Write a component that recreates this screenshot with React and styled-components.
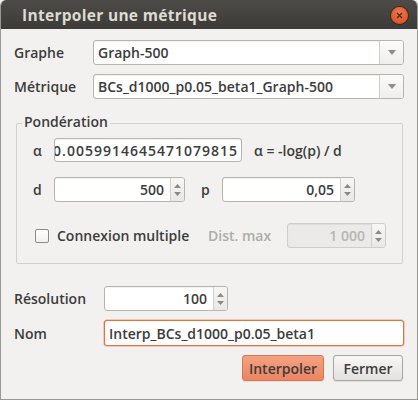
import React from 'react'
import styled, { createGlobalStyle } from 'styled-components'

const Global = createGlobalStyle`
  html, body { margin: 0; padding: 0; background: #f2f1f0; }
  * { box-sizing: border-box; }
  body { font-family: "Open Sans", "Noto Sans", sans-serif; }
`

const Window = styled.div`
  width: 418px;
  height: 400px;
  display: flex;
  flex-direction: column;
  background: #f2f1f0;
  border-radius: 6px 6px 0 0;
  overflow: hidden;
  border: 1px solid #9a9893;
  border-top: none;
`

const TitleBar = styled.div`
  height: 29px;
  flex: none;
  display: flex;
  align-items: center;
  justify-content: space-between;
  padding: 0 9px 0 21px;
  background: linear-gradient(#4c4b47, #3c3b37);
  color: #dfdbd2;
  font-size: 15.5px;
  font-weight: 700;
  letter-spacing: 0.3px;
`

const CloseBtn = styled.div`
  width: 17px;
  height: 17px;
  border-radius: 50%;
  background: radial-gradient(circle at 50% 35%, #f27a4d, #d9471a);
  box-shadow: 0 0 0 1px #3a2a22;
  display: flex;
  align-items: center;
  justify-content: center;
  margin-top: 1px;
`

const Body = styled.div`
  flex: 1;
  display: flex;
  flex-direction: column;
  padding: 11px 14px 0 13px;
  color: #3c3c3c;
  font-size: 14px;
  font-weight: 600;
`

const Row = styled.div`
  display: flex;
  align-items: center;
  height: ${p => p.$h || 25}px;
  margin-top: ${p => p.$mt || 0}px;
`

const Label = styled.div`
  width: ${p => p.$w}px;
  padding-left: ${p => p.$pl || 0}px;
  flex: none;
  white-space: nowrap;
  color: ${p => (p.$disabled ? '#aeaca8' : '#3c3c3c')};
`

const Field = styled.div`
  width: ${p => p.$w}px;
  height: ${p => p.$h || 25}px;
  flex: none;
  display: flex;
  align-items: center;
  background: ${p => (p.$disabled ? '#ebeae8' : '#fff')};
  border: 1px solid ${p => (p.$focus ? '#e2723f' : p.$disabled ? '#cfcdca' : '#b7b4ae')};
  border-radius: 3px;
  box-shadow: ${p => (p.$focus ? '0 0 0 0.5px #f0a07a' : 'inset 0 1px 1px rgba(0,0,0,0.06)')};
  overflow: hidden;
  color: ${p => (p.$disabled ? '#b8b6b2' : '#3c3c3c')};
`

const FieldText = styled.div`
  flex: 1;
  padding: 0 ${p => (p.$right ? 6 : 3)}px 0 ${p => (p.$right ? 0 : 4)}px;
  text-align: ${p => (p.$right ? 'right' : 'left')};
  white-space: nowrap;
  overflow: hidden;
  letter-spacing: ${p => p.$spacing || 0}px;
  direction: ${p => (p.$clipLeft ? 'rtl' : 'ltr')};
`

const ComboButton = styled.div`
  width: 24px;
  height: 100%;
  flex: none;
  border-left: 1px solid #d3d0cb;
  display: flex;
  align-items: center;
  justify-content: center;
  background: linear-gradient(#fbfbfa, #efeeec);
`

const SpinButtons = styled.div`
  width: 14px;
  height: 100%;
  flex: none;
  display: flex;
  flex-direction: column;
  align-items: center;
  justify-content: center;
  gap: 4px;
  border-left: 1px solid #d3d0cb;
  background: linear-gradient(#f7f6f5, #e9e8e6);
`

const Group = styled.div`
  position: relative;
  margin: 24px 0 0 2px;
  width: 387px;
  height: 141px;
  border: 1px solid #d2d0cc;
  border-radius: 2px;
  padding: 14px 0 0 13px;
  display: flex;
  flex-direction: column;
`

const GroupTitle = styled.div`
  position: absolute;
  top: -11px;
  left: 5px;
  padding: 0 2px;
  background: #f2f1f0;
  line-height: 18px;
`

const Check = styled.div`
  width: 14px;
  height: 14px;
  flex: none;
  border: 1px solid #8e8b86;
  border-radius: 2px;
  background: linear-gradient(#fff, #f1f0ee);
  margin: 0 8px 0 5px;
`

const ButtonRow = styled.div`
  display: flex;
  justify-content: flex-end;
  gap: 9px;
  margin-top: 9px;
`

const Button = styled.div`
  width: ${p => p.$w}px;
  height: 26px;
  display: flex;
  align-items: center;
  justify-content: center;
  border-radius: 3px;
  border: 1px solid ${p => (p.$primary ? '#d5784f' : '#a9a6a1')};
  background: ${p =>
    p.$primary ? 'linear-gradient(#f5a282, #ec8462)' : 'linear-gradient(#f8f7f6, #e3e1de)'};
  color: #3c3c3c;
  box-shadow: 0 1px 1px rgba(0,0,0,0.08);
`

const Arrow = ({ up }) => (
  <svg width="7" height="4" viewBox="0 0 7 4">
    <path d={up ? 'M0 4 L3.5 0 L7 4 Z' : 'M0 0 L7 0 L3.5 4 Z'} fill="#8b8985" />
  </svg>
)

const Combo = ({ w, value }) => (
  <Field $w={w} $h={25}>
    <FieldText>{value}</FieldText>
    <ComboButton>
      <svg width="8" height="5" viewBox="0 0 8 5">
        <path d="M0 0 L8 0 L4 5 Z" fill="#8e8c88" />
      </svg>
    </ComboButton>
  </Field>
)

const Spin = ({ w, value, disabled }) => (
  <Field $w={w} $disabled={disabled}>
    <FieldText $right>{value}</FieldText>
    <SpinButtons>
      <Arrow up />
      <Arrow />
    </SpinButtons>
  </Field>
)

export default function App() {
  return (
    <Window>
      <Global />
      <TitleBar>
        <span>Interpoler une métrique</span>
        <CloseBtn>
          <svg width="7" height="7" viewBox="0 0 7 7">
            <path d="M1 1 L6 6 M6 1 L1 6" stroke="#3d2a20" strokeWidth="1.3" />
          </svg>
        </CloseBtn>
      </TitleBar>
      <Body>
        <Row>
          <Label $w={79}>Graphe</Label>
          <Combo w={311} value="Graph-500" />
        </Row>
        <Row $mt={9}>
          <Label $w={79}>Métrique</Label>
          <Combo w={311} value="BCs_d1000_p0.05_beta1_Graph-500" />
        </Row>
        <Group>
          <GroupTitle>Pondération</GroupTitle>
          <Row $h={24}>
            <Label $w={24} $pl={3}>α</Label>
            <Field $w={188} $h={24}>
              <FieldText $clipLeft $spacing={1}>0.0059914645471079815</FieldText>
            </Field>
            <Label $w={120} $pl={12}>α = -log(p) / d</Label>
          </Row>
          <Row $mt={15} $h={25}>
            <Label $w={24} $pl={3}>d</Label>
            <Spin w={131} value="500" />
            <Label $w={37} $pl={16}>p</Label>
            <Spin w={133} value="0,05" />
          </Row>
          <Row $mt={21} $h={25}>
            <Check />
            <Label $w={151}>Connexion multiple</Label>
            <Label $w={79} $disabled>Dist. max</Label>
            <Spin w={99} value="1 000" disabled />
          </Row>
        </Group>
        <Row $mt={22}>
          <Label $w={90}>Résolution</Label>
          <Spin w={124} value="100" />
        </Row>
        <Row $mt={9} $h={26}>
          <Label $w={90}>Nom</Label>
          <Field $w={300} $h={26} $focus>
            <FieldText>Interp_BCs_d1000_p0.05_beta1</FieldText>
          </Field>
        </Row>
        <ButtonRow>
          <Button $w={82} $primary>Interpoler</Button>
          <Button $w={70}>Fermer</Button>
        </ButtonRow>
      </Body>
    </Window>
  )
}
